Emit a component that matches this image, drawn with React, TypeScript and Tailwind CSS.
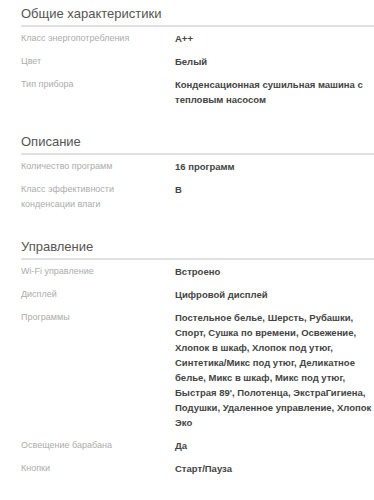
import React from "react";

type Row = { label: string; value: string };
type Section = { title: string; rows: Row[] };

const sections: Section[] = [
  {
    title: "Общие характеристики",
    rows: [
      { label: "Класс энергопотребления", value: "A++" },
      { label: "Цвет", value: "Белый" },
      { label: "Тип прибора", value: "Конденсационная сушильная машина с тепловым насосом" },
    ],
  },
  {
    title: "Описание",
    rows: [
      { label: "Количество программ", value: "16 программ" },
      { label: "Класс эффективности конденсации влаги", value: "B" },
    ],
  },
  {
    title: "Управление",
    rows: [
      { label: "Wi-Fi управление", value: "Встроено" },
      { label: "Дисплей", value: "Цифровой дисплей" },
      {
        label: "Программы",
        value:
          "Постельное белье, Шерсть, Рубашки, Спорт, Сушка по времени, Освежение, Хлопок в шкаф, Хлопок под утюг, Синтетика/Микс под утюг, Деликатное белье, Микс в шкаф, Микс под утюг, Быстрая 89', Полотенца, ЭкстраГигиена, Подушки, Удаленное управление, Хлопок Эко",
      },
      { label: "Освещение барабана", value: "Да" },
      { label: "Кнопки", value: "Старт/Пауза" },
    ],
  },
];

export default function App() {
  return (
    <div className="w-[374px] bg-white pl-[21px] pt-[4px] font-['Liberation_Sans',Arial,sans-serif]">
      {sections.map((s, i) => (
        <section key={s.title} className={i === 0 ? "" : "mt-[21px]"}>
          <h2 className="border-b-2 border-[#e0e0e0] pb-[1px] text-[13px] leading-[20px] font-normal text-[#555]">
            {s.title}
          </h2>
          <dl>
            {s.rows.map((r) => (
              <div key={r.label} className="flex py-[4px] leading-[15px]">
                <dt className="w-[154px] shrink-0 pr-4 text-[9px] text-[#acacac]">{r.label}</dt>
                <dd className="w-[199px] text-[9.5px] font-bold text-[#444]">{r.value}</dd>
              </div>
            ))}
          </dl>
        </section>
      ))}
    </div>
  );
}
